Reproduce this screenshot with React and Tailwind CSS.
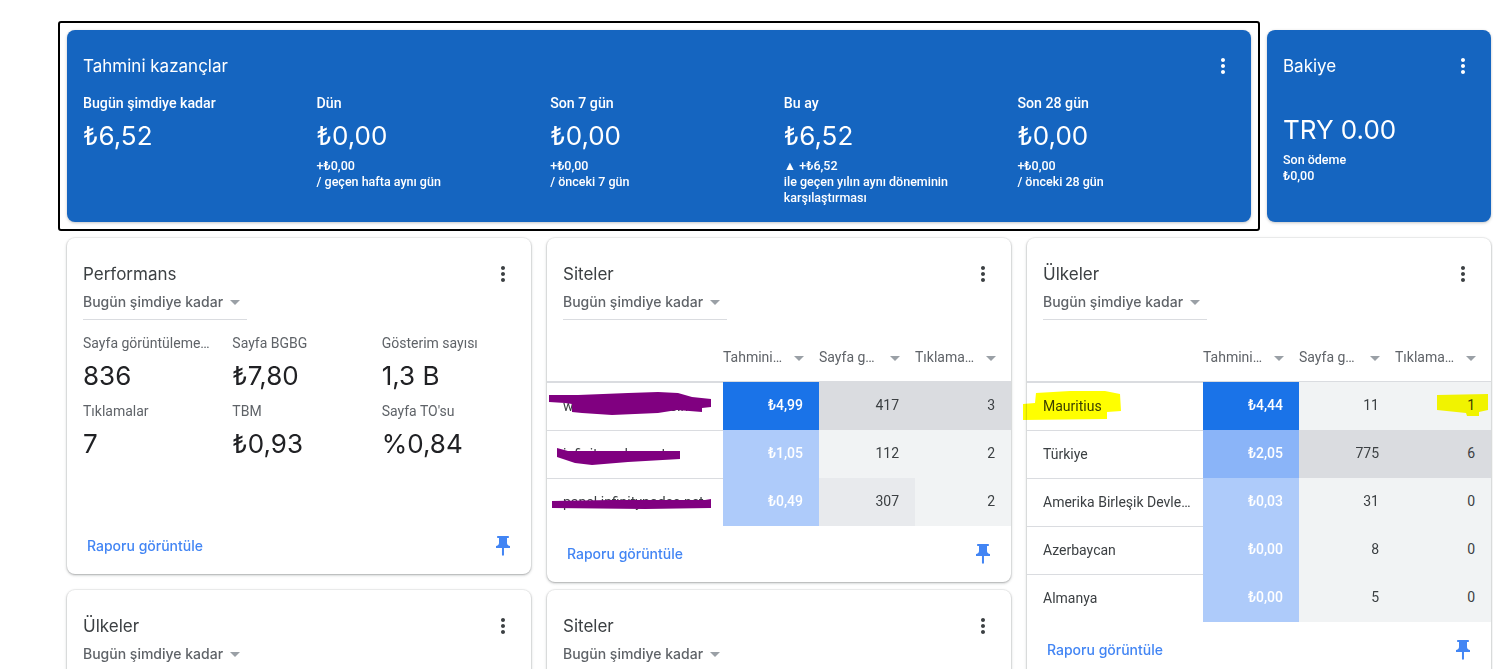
import React from 'react';

const sans = "font-['Roboto','Liberation_Sans',sans-serif]";
const display = "font-['Inter','Roboto',sans-serif]";

const MoreIcon = ({ className }) => (
  <svg viewBox="0 0 24 24" className={`w-6 h-6 fill-current ${className}`}>
    <path d="M12 8c1.1 0 2-.9 2-2s-.9-2-2-2-2 .9-2 2 .9 2 2 2zm0 2c-1.1 0-2 .9-2 2s.9 2 2 2 2-.9 2-2-.9-2-2-2zm0 6c-1.1 0-2 .9-2 2s.9 2 2 2 2-.9 2-2-.9-2-2-2z" />
  </svg>
);

const PinIcon = () => (
  <svg viewBox="0 0 24 24" className="w-6 h-6 fill-[#4285f4]">
    <path d="M16 9V4h1c.55 0 1-.45 1-1s-.45-1-1-1H7c-.55 0-1 .45-1 1s.45 1 1 1h1v5c0 1.66-1.34 3-3 3v2h5.97v7l1 1 1-1v-7H19v-2c-1.66 0-3-1.34-3-3z" />
  </svg>
);

const Caret = () => <span className="w-0 h-0 border-x-[5px] border-x-transparent border-t-[5px] border-t-[#9aa0a6]" />;

// marker strokes drawn over the cell, coordinates are cell pixels
const Scribble = ({ points, color = '#800080', blend = '' }) => (
  <svg className={`absolute left-0 top-0 w-full h-full overflow-visible ${blend}`}>
    <polygon points={points} fill={color} />
  </svg>
);

const Earning = ({ label, value, lines }) => (
  <div>
    <div className="text-[14.2px] font-medium leading-5">{label}</div>
    <div className={`${display} text-[26px] leading-9 mt-[5px]`}>{value}</div>
    <div className="text-[12.5px] font-medium leading-4 mt-[4px] pr-10">
      {lines.map((l) => (
        <div key={l}>{l}</div>
      ))}
    </div>
  </div>
);

const CardHead = ({ title }) => (
  <div className="pl-4 pr-4 pt-6">
    <div className="flex items-center justify-between h-6">
      <h2 className={`${display} text-[17px] text-[#3c4043] pt-[2px]`}>{title}</h2>
      <MoreIcon className="text-[#3c4043]" />
    </div>
    <div className="mt-1 w-[164px] h-[30px] border-b border-[#dadce0] flex items-start">
      <div className="h-6 flex items-center gap-[7px]">
        <span className={`${display} text-sm font-medium text-[#5f6368]`}>Bugün şimdiye kadar</span>
        <Caret />
      </div>
    </div>
  </div>
);

const CardFoot = () => (
  <div className="h-14 flex items-center justify-between pl-5 pr-4 shrink-0">
    <a className={`${display} text-sm font-medium text-[#4285f4]`}>Raporu görüntüle</a>
    <PinIcon />
  </div>
);

const Card = ({ className = '', children }) => (
  <div className={`bg-white rounded-lg shadow-[0_0_0_1px_rgba(60,64,67,0.06),0_1px_2px_rgba(60,64,67,0.3),0_1px_3px_1px_rgba(60,64,67,0.1)] flex flex-col shrink-0 ${className}`}>
    {children}
  </div>
);

const metrics = [
  ['Sayfa görüntülemeleri', '836'],
  ['Sayfa BGBG', '₺7,80'],
  ['Gösterim sayısı', '1,3 B'],
  ['Tıklamalar', '7'],
  ['TBM', '₺0,93'],
  ["Sayfa TO'su", '%0,84'],
];

const Header = () => (
  <div className="grid grid-cols-[176px_96px_96px_96px] h-12 mt-[14px]">
    <div />
    {['Tahmini kazançlar', 'Sayfa görüntülemeleri', 'Tıklamalar'].map((h) => (
      <div key={h} className="flex items-center">
        <span className="w-[60px] truncate text-sm text-[#5f6368] pb-[2px]">{h}</span>
        <span className="ml-[11px] flex"><Caret /></span>
      </div>
    ))}
  </div>
);

const Row = ({ name, over, earn, earnBg, views, viewsBg, clicks, clicksBg, clicksOver }) => (
  <div className="grid grid-cols-[176px_96px_96px_96px] h-12 text-sm text-[#3c4043]">
    <div className="relative border-t border-[#dadce0] pl-4 pr-2 pb-[2px] flex items-center whitespace-nowrap">
      <span className="truncate">{name}</span>
      {over}
    </div>
    <div className={`${earnBg} flex items-center justify-end pr-4 pb-[2px] text-white font-medium`}>{earn}</div>
    <div className={`${viewsBg} flex items-center justify-end pr-4 pb-[2px]`}>{views}</div>
    <div className={`${clicksBg} relative flex items-center justify-end pr-4 pb-[2px]`}>
      {clicks}
      {clicksOver}
    </div>
  </div>
);

const Table = ({ rows }) => (
  <>
    <Header />
    <div className="border-t border-[#dadce0] -mt-px" />
    {rows.map((r) => (
      <Row key={r.name} {...r} />
    ))}
  </>
);

const siteRows = [
  {
    name: 'www.infinitynodes.net',
    over: <Scribble points="2,12 31,12 81,10 111,9 131,10 145,14 164,16 164,24 155,25 155,29 130,27 111,30 65,32 35,30 25,29 25,21 18,20 2,19" />,
    earn: '₺4,99', earnBg: 'bg-[#1a73e8]', views: '417', viewsBg: 'bg-[#dadce0]', clicks: '3', clicksBg: 'bg-[#dadce0]',
  },
  {
    name: 'infinitynodes.net',
    over: <Scribble points="10,17 21,20 81,20 133,20 133,28 81,31 45,34 28,32 10,26" />,
    earn: '₺1,05', earnBg: 'bg-[#aecbfa]', views: '112', viewsBg: 'bg-[#f1f3f4]', clicks: '2', clicksBg: 'bg-[#f1f3f4]',
  },
  {
    name: 'panel.infinitynodes.net',
    over: <Scribble points="5,22 65,21 158,21 164,20 164,29 98,30 5,29" />,
    earn: '₺0,49', earnBg: 'bg-[#aecbfa]', views: '307', viewsBg: 'bg-[#e8eaed]', clicks: '2', clicksBg: 'bg-[#f1f3f4]',
  },
];

const countryRows = [
  {
    name: 'Mauritius',
    over: <Scribble color="#ffff00" blend="mix-blend-multiply" points="-4,21 8,20 9,10 43,8 78,8 93,11 94,28 80,29 80,36 -4,37" />,
    earn: '₺4,44', earnBg: 'bg-[#1a73e8]', views: '11', viewsBg: 'bg-[#f1f3f4]', clicks: '1', clicksBg: 'bg-[#f1f3f4]',
    clicksOver: <Scribble color="#ffff00" blend="mix-blend-multiply" points="42,13 93,12 93,28 84,30 84,34 72,34 71,31 42,28" />,
  },
  { name: 'Türkiye', earn: '₺2,05', earnBg: 'bg-[#8ab4f8]', views: '775', viewsBg: 'bg-[#dadce0]', clicks: '6', clicksBg: 'bg-[#dadce0]' },
  { name: 'Amerika Birleşik Devletleri', earn: '₺0,03', earnBg: 'bg-[#aecbfa]', views: '31', viewsBg: 'bg-[#f1f3f4]', clicks: '0', clicksBg: 'bg-[#f1f3f4]' },
  { name: 'Azerbaycan', earn: '₺0,00', earnBg: 'bg-[#aecbfa]', views: '8', viewsBg: 'bg-[#f1f3f4]', clicks: '0', clicksBg: 'bg-[#f1f3f4]' },
  { name: 'Almanya', earn: '₺0,00', earnBg: 'bg-[#aecbfa]', views: '5', viewsBg: 'bg-[#f1f3f4]', clicks: '0', clicksBg: 'bg-[#f1f3f4]' },
];

const App = () => {
  return (
    <div className={`${sans} h-[669px] overflow-hidden bg-white pl-[67px] pr-[2px] pt-[30px]`}>
      {/* Kazanç kartları */}
      <div className="flex gap-4 h-[192px]">
        <div className="relative w-[1184px] shrink-0 bg-[#1565c0] rounded-lg text-white pt-6 pl-4 shadow-[0_1px_3px_rgba(60,64,67,0.3)]">
          <span className="absolute -inset-[9px] border-2 border-black rounded-[3px] pointer-events-none" />
          <div className="flex items-center justify-between h-6 pr-4">
            <h2 className={`${display} text-[17px] pt-[2px]`}>Tahmini kazançlar</h2>
            <MoreIcon />
          </div>
          <div className="grid grid-cols-5 mt-[15px]">
            <Earning label="Bugün şimdiye kadar" value="₺6,52" lines={[]} />
            <Earning label="Dün" value="₺0,00" lines={['+₺0,00', '/ geçen hafta aynı gün']} />
            <Earning label="Son 7 gün" value="₺0,00" lines={['+₺0,00', '/ önceki 7 gün']} />
            <Earning label="Bu ay" value="₺6,52" lines={['▲ +₺6,52', 'ile geçen yılın aynı döneminin karşılaştırması']} />
            <Earning label="Son 28 gün" value="₺0,00" lines={['+₺0,00', '/ önceki 28 gün']} />
          </div>
        </div>
        <div className="w-[224px] shrink-0 bg-[#1565c0] rounded-lg text-white pt-6 px-4 shadow-[0_1px_3px_rgba(60,64,67,0.3)]">
          <div className="flex items-center justify-between h-6">
            <h2 className={`${display} text-[17px] pt-[2px]`}>Bakiye</h2>
            <MoreIcon />
          </div>
          <div className={`${display} text-[26px] leading-9 mt-[34px]`}>TRY 0.00</div>
          <div className="text-[12.5px] font-medium leading-4 mt-[4px]">
            <div>Son ödeme</div>
            <div>₺0,00</div>
          </div>
        </div>
      </div>

      {/* Alt kartlar */}
      <div className="grid grid-cols-[464px_464px_464px] gap-4 mt-4 items-start">
        <div className="flex flex-col gap-4">
          <Card className="h-[336px]">
            <CardHead title="Performans" />
            <div className="grid grid-cols-3 pl-4 mt-[13px] flex-1 content-start">
              {metrics.map(([label, value]) => (
                <div key={label} className="pr-[21px] h-[68px]">
                  <div className="text-sm text-[#5f6368] leading-5 truncate">{label}</div>
                  <div className={`${display} text-[26px] text-[#202124] leading-9 mt-[5px]`}>{value}</div>
                </div>
              ))}
            </div>
            <CardFoot />
          </Card>
          <Card className="h-[336px]">
            <CardHead title="Ülkeler" />
          </Card>
        </div>

        <div className="flex flex-col gap-2">
          <Card>
            <CardHead title="Siteler" />
            <Table rows={siteRows} />
            <CardFoot />
          </Card>
          <Card className="h-[336px]">
            <CardHead title="Siteler" />
          </Card>
        </div>

        <div>
          <Card>
            <CardHead title="Ülkeler" />
            <Table rows={countryRows} />
            <CardFoot />
          </Card>
        </div>
      </div>
    </div>
  );
};

export default App;
